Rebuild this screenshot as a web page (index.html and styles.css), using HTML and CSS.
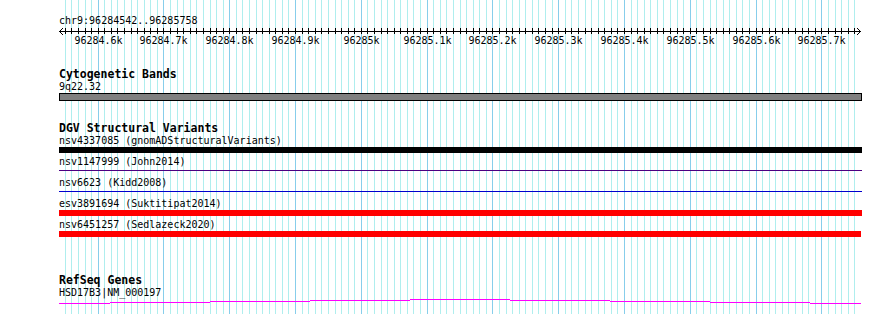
FILE: index.html
```html
<!DOCTYPE html>
<html lang="en">
<head>
    <meta charset="UTF-8">
    <title>chr9:96284542..96285758</title>
    <link rel="stylesheet" href="styles.css">
</head>
<body>
    <!-- Grid lines, drawn by the script below -->
    <svg class="grid" id="grid" width="890" height="314"></svg>

    <div class="browser">
        <div class="ruler">
            <div class="locus">chr9:96284542..96285758</div>
            <svg class="scale" id="scale" width="803" height="20"></svg>
        </div>

        <div class="track cytoband">
            <div class="track-title">Cytogenetic Bands</div>
            <div class="feature-label">9q22.32</div>
            <div class="band"></div>
        </div>

        <div class="track dgv">
            <div class="track-title">DGV Structural Variants</div>
            <div class="sv-row">
                <div class="feature-label">nsv4337085 (gnomADStructuralVariants)</div>
                <div class="sv-bar sv-thick sv-black"></div>
            </div>
            <div class="sv-row">
                <div class="feature-label">nsv1147999 (John2014)</div>
                <div class="sv-bar sv-thin sv-purple"></div>
            </div>
            <div class="sv-row">
                <div class="feature-label">nsv6623 (Kidd2008)</div>
                <div class="sv-bar sv-thin sv-blue"></div>
            </div>
            <div class="sv-row">
                <div class="feature-label">esv3891694 (Suktitipat2014)</div>
                <div class="sv-bar sv-thick sv-red"></div>
            </div>
            <div class="sv-row">
                <div class="feature-label">nsv6451257 (Sedlazeck2020)</div>
                <div class="sv-bar sv-thick sv-red sv-short"></div>
            </div>
        </div>

        <div class="track refseq">
            <div class="track-title">RefSeq Genes</div>
            <div class="feature-label">HSD17B3|NM_000197</div>
            <svg class="gene" width="803" height="6">
                <path d="M0 5.5H51M51 4.5H151M151 3.5H251M251 2.5H351M351 1.5H451M451 2.5H551M551 3.5H651M651 4.5H751M751 5.5H802"/>
            </svg>
        </div>
    </div>

    <script>
        var START = 96284542, END = 96285758;
        var LEFT = 60, WIDTH = 800, ORIGIN = 59;
        var NS = 'http://www.w3.org/2000/svg';

        function toX(bp) {
            return Math.floor(LEFT + (bp - START) * WIDTH / (END - START)) + 0.5;
        }

        function el(name, attrs) {
            var node = document.createElementNS(NS, name);
            for (var k in attrs) node.setAttribute(k, attrs[k]);
            return node;
        }

        var grid = document.getElementById('grid');
        var scale = document.getElementById('scale');
        var majors = [];

        for (var bp = Math.ceil(START / 10) * 10; bp <= END; bp += 10) {
            var x = toX(bp);
            var major = bp % 100 === 0;
            if (major) majors.push(bp);
            else grid.appendChild(el('line', { x1: x, x2: x, y1: 0, y2: 314, 'class': 'minor' }));
            scale.appendChild(el('line', { x1: x - ORIGIN, x2: x - ORIGIN, y1: 2, y2: 8 }));
        }

        majors.forEach(function (bp) {
            var x = toX(bp);
            grid.appendChild(el('line', { x1: x, x2: x, y1: 0, y2: 314, 'class': 'major' }));
            var label = el('text', { x: x - ORIGIN, y: 17.5 });
            label.textContent = (bp / 1000) + 'k';
            scale.appendChild(label);
        });

        // axis with arrows at both ends
        scale.appendChild(el('line', { x1: 0, x2: 802, y1: 5.5, y2: 5.5 }));
        scale.appendChild(el('polyline', { points: '4,2 0.5,5.5 4,9', 'class': 'arrow' }));
        scale.appendChild(el('polyline', { points: '798,2 801.5,5.5 798,9', 'class': 'arrow' }));
    </script>
</body>
</html>
```

FILE: styles.css
```css
* {
    margin: 0;
    padding: 0;
    box-sizing: border-box;
}

body {
    position: relative;
    width: 890px;
    height: 314px;
    overflow: hidden;
    background: #fff;
    color: #000;
    font-family: "DejaVu Sans Mono", monospace;
    font-size: 10px;
}

.grid {
    position: absolute;
    top: 0;
    left: 0;
}

.grid line {
    stroke-width: 1;
    shape-rendering: crispEdges;
}

.grid .minor {
    stroke: #afeeee;
}

.grid .major {
    stroke: #87ceeb;
}

.browser {
    position: relative;
    width: 862px;
    padding-left: 59px;
}

.ruler {
    padding-top: 15px;
}

.locus {
    line-height: 11px;
}

.scale {
    display: block;
}

.scale line {
    stroke: #000;
    stroke-width: 1;
    shape-rendering: crispEdges;
}

.scale .arrow {
    fill: none;
    stroke: #000;
    stroke-width: 1;
}

.scale text {
    font-family: "DejaVu Sans Mono", monospace;
    font-size: 10px;
    text-anchor: middle;
    fill: #000;
}

.track-title {
    font-weight: bold;
    font-size: 11.5px;
    line-height: 13px;
}

.feature-label {
    line-height: 11px;
    white-space: nowrap;
}

/* Cytogenetic Bands */
.cytoband {
    margin-top: 22px;
}

.band {
    width: 803px;
    height: 8px;
    margin-top: 1px;
    border: 1px solid #000;
    background: #808080;
}

/* DGV Structural Variants */
.dgv {
    margin-top: 21px;
}

.sv-row {
    height: 21px;
}

.sv-bar {
    width: 803px;
}

.sv-thick {
    height: 6px;
    margin-top: 1px;
}

.sv-thin {
    height: 1px;
    margin-top: 3px;
}

.sv-short {
    width: 802px;
}

.sv-black {
    background: #000;
}

.sv-purple {
    background: #4b0082;
}

.sv-blue {
    background: #0000cd;
}

.sv-red {
    background: #ff0000;
}

/* RefSeq Genes */
.refseq {
    margin-top: 34px;
}

.gene {
    display: block;
}

.gene path {
    fill: none;
    stroke: #ff00ff;
    stroke-width: 1;
    shape-rendering: crispEdges;
}
```
